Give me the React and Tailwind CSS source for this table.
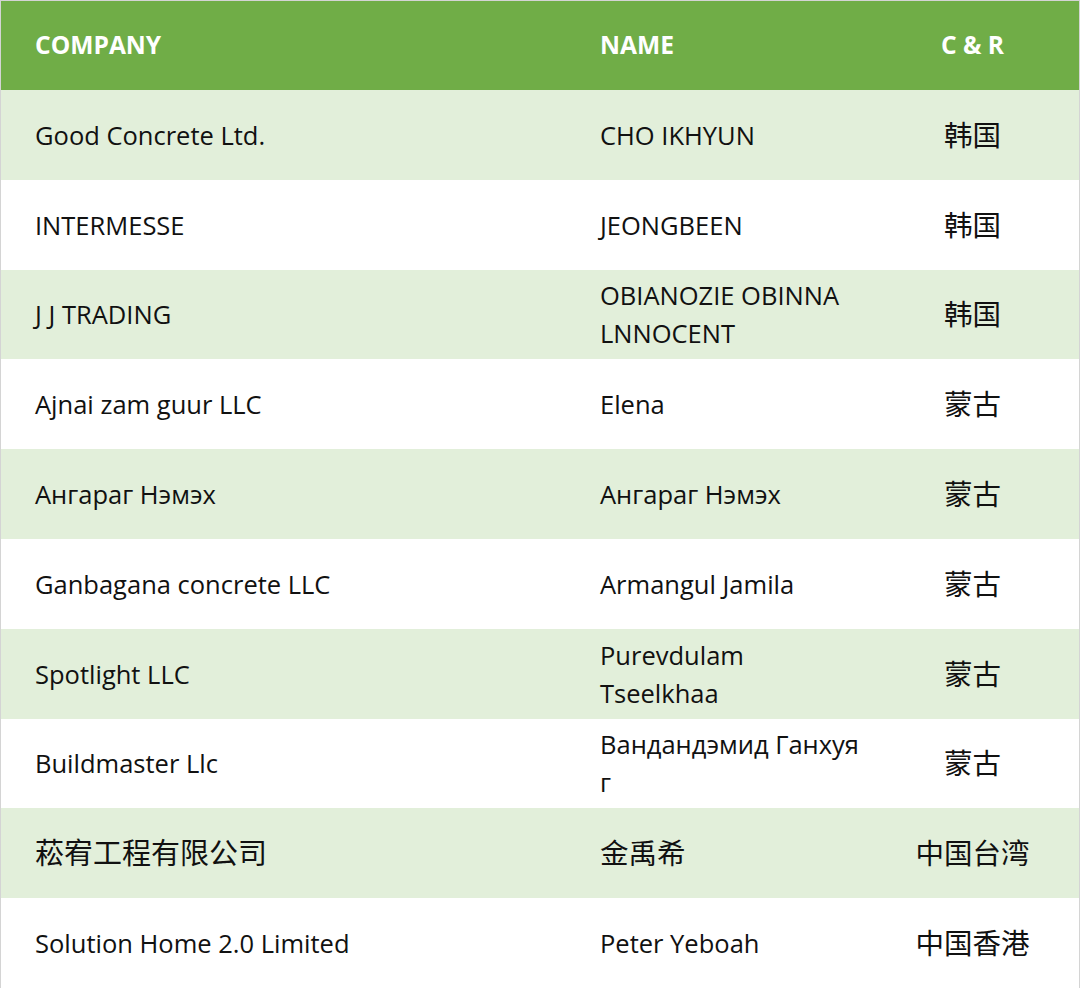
import React from 'react'

const rows = [
  { company: 'Good Concrete Ltd.', name: ['CHO IKHYUN'], cr: '韩国' },
  { company: 'INTERMESSE', name: ['JEONGBEEN'], cr: '韩国' },
  { company: 'J J TRADING', name: ['OBIANOZIE OBINNA', 'LNNOCENT'], cr: '韩国' },
  { company: 'Ajnai zam guur LLC', name: ['Elena'], cr: '蒙古' },
  { company: 'Ангараг Нэмэх', name: ['Ангараг Нэмэх'], cr: '蒙古' },
  { company: 'Ganbagana concrete LLC', name: ['Armangul Jamila'], cr: '蒙古' },
  { company: 'Spotlight LLC', name: ['Purevdulam', 'Tseelkhaa'], cr: '蒙古' },
  { company: 'Buildmaster Llc', name: ['Вандандэмид Ганхуя', 'г'], cr: '蒙古' },
  { company: '菘宥工程有限公司', name: ['金禹希'], cr: '中国台湾', cjk: true },
  { company: 'Solution Home 2.0 Limited', name: ['Peter Yeboah'], cr: '中国香港' },
]

const font = { fontFamily: '"Open Sans", "Noto Sans CJK SC", sans-serif' }

const App = () => {
  return (
    <div className="w-[1080px] h-[988px] bg-white border border-[#d4d4d4] text-[25.5px] text-[#111]" style={font}>
      <div className="grid grid-cols-[565px_300px_1fr] h-[89px] bg-[#70ad47] text-white font-bold text-[24.6px] items-center">
        <div className="pl-[34px]">COMPANY</div>
        <div className="pl-[34px]">NAME</div>
        <div className="text-center">C &amp; R</div>
      </div>
      {rows.map((r, i) => (
        <div
          key={i}
          className={`grid grid-cols-[565px_300px_1fr] h-[89.8px] items-center leading-[38px] ${i % 2 === 0 ? 'bg-[#e2efda]' : 'bg-white'}`}
        >
          <div className={`pl-[34px] ${r.cjk ? 'text-[29px]' : ''}`}>{r.company}</div>
          <div className={`pl-[34px] ${r.cjk ? 'text-[28.5px]' : ''}`}>
            {r.name.map((line, j) => (
              <div key={j}>{line}</div>
            ))}
          </div>
          <div className="text-center text-[28.5px]">{r.cr}</div>
        </div>
      ))}
    </div>
  )
}

export default App
